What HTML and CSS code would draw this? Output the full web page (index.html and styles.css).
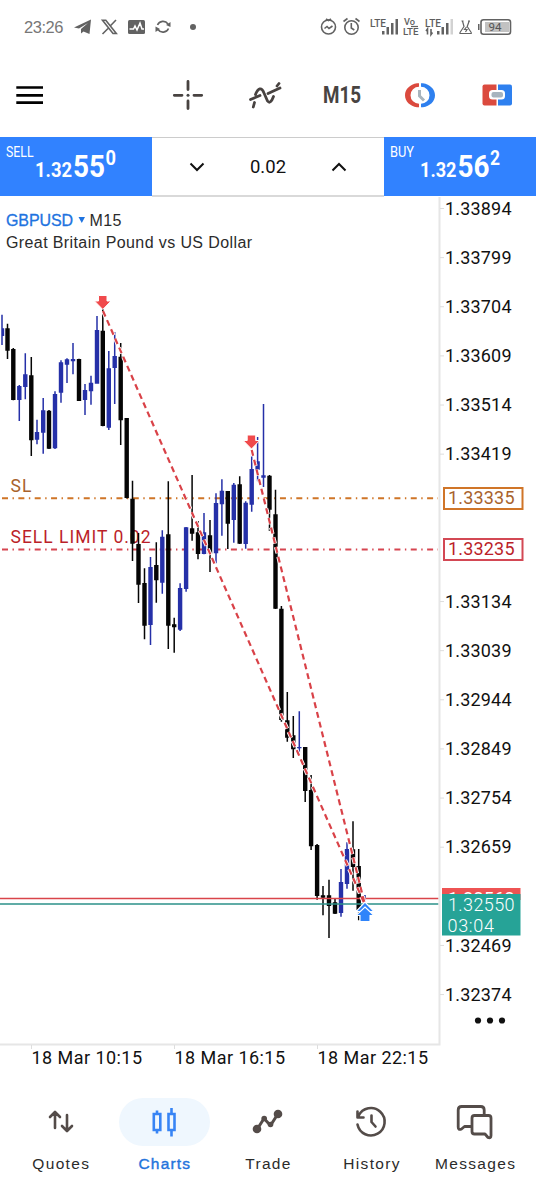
FILE: index.html
```html
<!DOCTYPE html>
<html lang="en">
<head>
<meta charset="utf-8">
<title>GBPUSD M15</title>
<link rel="stylesheet" href="styles.css">
</head>
<body>
<header class="status">
  <svg width="536" height="54" viewBox="0 0 536 54">
    <text class="clock" x="24" y="33" textLength="39.500">23:26</text>
    <path class="sfill" d="M74 27.500 91 19.500 89.500 34 83.500 31.500 81 33.500V29L88 23 79 28.500Z"/>
    <g class="sline"><path d="M102.500 20.300h3.300l10.500 13.200h-3.300zM116 20 110.200 26M108 28.500 102.500 34"/></g>
    <rect class="sfill" x="128" y="20" width="17" height="14" rx="1.500"/>
    <path d="M129.500 29h4l1.500-3 2 4 3-7 2 6h2" fill="none" stroke="#fff" stroke-width="1.500"/>
    <g class="sline"><path d="M157.500 25a6 6 0 0 1 10.500-1M168.500 28.500a6 6 0 0 1-10.500 1"/></g>
    <path class="sfill" d="M170.500 22v5l-4.500-2zM155.500 32v-5.500l4.500 2.500z"/>
    <circle class="sfill" cx="193" cy="27" r="3"/>
    <g class="sline">
      <circle cx="328.500" cy="27" r="7"/><path d="M324.500 28.500l2.500-2 2 2 3.500-2.500M326 19l2.500 1.500L331 19"/>
      <circle cx="351.500" cy="27.500" r="6.700"/><path d="M351.300 23v5l3 2M343.500 21.500l4-3M359.500 21.500l-4-3"/>
    </g>
    <text class="tiny" x="370" y="26.500" textLength="16" lengthAdjust="spacingAndGlyphs">LTE</text>
    <path class="sfill" d="M382 31h2.500v3.500H382zM386.500 27h2.500v7.500h-2.500zM391 23h2.500v11.500H391zM395.500 19h2.500v15.500h-2.500z"/>
    <text class="tiny stack" x="404" y="25" textLength="11" lengthAdjust="spacingAndGlyphs">Vo</text>
    <text class="tiny stack" x="403" y="35" textLength="15.500" lengthAdjust="spacingAndGlyphs">LTE</text>
    <path class="sline thin" d="M411 26.500h7"/>
    <text class="tiny" x="425" y="26.500" textLength="16" lengthAdjust="spacingAndGlyphs">LTE</text>
    <path class="sline" d="M427.500 34.500v-5.500l-1.500 2M431 29v5.500l1.500-2"/>
    <path class="sfill" d="M437 31h2.500v3.500H437zM441.500 27h2.500v7.500h-2.500zM446 23h2.500v11.500H446z"/>
    <path d="M450.500 19h2.500v15.500h-2.500z" fill="#d2d2d2"/>
    <path class="sline thin" d="M462.500 21l1.500 5.500-4 6q-.8 1 1 1h9.500q1.500 0 .7-1l-4-6 2-5.500M461.500 21h2M468 21h2M466.500 27l-2 2.500h2.500l-1.500 2.500"/>
    <rect class="sline" x="481" y="19.700" width="29.500" height="14.500" rx="2.500"/>
    <path class="sfill" d="M478 24h1.500v6H478z"/><rect x="485" y="22" width="24" height="10" fill="#c2c2c2"/>
    <text class="battery" x="488.500" y="31.200" textLength="13" lengthAdjust="spacingAndGlyphs">94</text>
  </svg>
</header>

<nav class="toolbar">
  <svg width="28" height="28" viewBox="16 81 28 28"><path d="M16.300 87.500h26.700M16.300 95.300h26.700M16.300 102.700h26.700" stroke="#000" stroke-width="2.700"/></svg>
  <span></span>
  <svg width="32" height="32" viewBox="171.500 79 32 32"><path class="tool" d="M187.500 81.500v8M187.500 101v7.500M173.800 95.300h7.700M193.500 95.300h7.700"/><circle cx="187.500" cy="95.300" r="1.500" fill="#444"/></svg>
  <svg width="34" height="32" viewBox="247 79 34 32"><path class="tool" d="M249.500 99.500l9.500-4M254.500 94.500c2.500-6.500 6-8 8.500-1.500l3.500 8c2 2.500 4 1 6-4.500M253.500 102.500l-1.200 4.500M267 93.500l12-5.500M276 86l2-2.500"/></svg>
  <svg width="50" height="40" viewBox="317 75 50 40"><text class="period" x="323" y="103" textLength="38" lengthAdjust="spacingAndGlyphs">M15</text></svg>
  <svg width="32" height="32" viewBox="404 79 32 32"><path d="M419 83.200h-2c-7 1-12 6-12 12s5 11 12 12h2v-3.500a8.500 8.500 0 0 1 0-17z" fill="#db4a3e"/><path d="M421 83.200h2c7 1 12 6 12 12s-5 11-12 12h-2v-3.500a8.500 8.500 0 0 0 0-17z" fill="#2e80ef"/><path d="M419.500 90v6l4.500 4.500" fill="none" stroke="#a8b4bd" stroke-width="3"/></svg>
  <svg width="32" height="26" viewBox="481 82.500 32 26"><path d="M496.500 85h-12q-2 0-2 2v17q0 2 2 2h12z" fill="#db4a3e"/><path d="M498 85h12q2 0 2 2v17q0 2-2 2h-12z" fill="#2e80ef"/><rect x="489" y="90.500" width="16" height="9.500" rx="3.500" fill="#fff"/><rect x="491.500" y="92.500" width="11.500" height="5.500" rx="2" fill="#a7b4be"/></svg>
</nav>

<section class="trade">
  <svg class="quote" width="152" height="59" viewBox="0 137 152 59">
    <text x="6" y="157" font-size="15.500" textLength="27.500" lengthAdjust="spacingAndGlyphs">SELL</text>
    <g class="price"><text x="35" y="177" font-size="20.500" textLength="37" lengthAdjust="spacingAndGlyphs">1.32</text><text x="73" y="177" font-size="31.500" textLength="32" lengthAdjust="spacingAndGlyphs">55</text><text x="105.500" y="164.500" font-size="20" textLength="10.500" lengthAdjust="spacingAndGlyphs">0</text></g>
  </svg>
  <div class="stepper">
    <svg width="18" height="12" viewBox="0 0 18 12"><path d="M2.500 2.500 9 9l6.500-6.500"/></svg>
    <span>0.02</span>
    <svg width="18" height="12" viewBox="0 0 18 12"><path d="M2.500 9.500 9 3l6.500 6.500"/></svg>
  </div>
  <svg class="quote" width="152" height="59" viewBox="384 137 152 59">
    <text x="390" y="157" font-size="15.500" textLength="24" lengthAdjust="spacingAndGlyphs">BUY</text>
    <g class="price"><text x="420" y="177" font-size="20.500" textLength="36.500" lengthAdjust="spacingAndGlyphs">1.32</text><text x="457.500" y="177" font-size="31.500" textLength="32" lengthAdjust="spacingAndGlyphs">56</text><text x="490" y="164.500" font-size="20" textLength="10" lengthAdjust="spacingAndGlyphs">2</text></g>
  </svg>
</section>

<main>
  <svg class="chart" width="536" height="873" viewBox="0 197 536 873">
    <g fill="none" stroke-width="2" stroke-dasharray="6 4.500 1.400 4.450">
      <path d="M2 498.200H438" stroke="#cf7527"/><path d="M2 549.500H438" stroke="#d64550"/>
    </g>
    <text x="10.500" y="492" fill="#a8622c" font-size="17.500" textLength="21">SL</text>
    <text x="10.500" y="543" fill="#bb1f29" font-size="17.500" textLength="140">SELL LIMIT 0.02</text>
    <g id="candles"></g>
    <path d="M0 898.500H438.500" stroke="#d9444a" stroke-width="1.600"/>
    <path d="M0 904H438.500" stroke="#2b9189" stroke-width="1.600"/>
    <g fill="none">
      <path d="M103 311 365 905M251.700 450 365 905" stroke="#fff" stroke-width="4" stroke-dasharray="6.500 3.500"/>
      <path d="M103 311 365 905M251.700 450 365 905" stroke="#d94248" stroke-width="2.200" stroke-dasharray="6 4"/>
    </g>
    <g fill="#f04a4c" stroke="#fff" stroke-width="1">
      <path d="M98.500 295.500h8.500v5.500h4l-8.200 8.500-8.300-8.500h4z"/>
      <path d="M247.200 435h8.500v5.500h4l-8.200 8.500-8.300-8.500h4z"/>
    </g>
    <g stroke="#fff" stroke-width="1.100" fill="#2f84fa">
      <path d="M365 902l9 9.500h-4v4h-10v-4h-4z"/>
      <path d="M365 907l9 8.500h-4v6h-10v-6h-4z"/>
    </g>
    <path d="M439.500 197V1044.500M0 1044.500H440.500" stroke="#e6e6e6" stroke-width="2"/>
    <path d="M31.500 1045v4M174.500 1045v4M317.500 1045v4" stroke="#dedede"/>
    <g id="prices"></g>
    <g fill="#fff" stroke-width="2"><rect x="444" y="488" width="78.500" height="21" stroke="#d07528"/><rect x="444" y="539" width="78.500" height="21" stroke="#d34854"/></g>
    <text x="448" y="504" fill="#a8622c" textLength="66.500">1.33335</text>
    <text x="448" y="555" fill="#bb1f29" textLength="66.500">1.33235</text>
    <rect x="442" y="888" width="78.500" height="12" fill="#ee5353"/>
    <text x="448" y="904.500" fill="#fff" textLength="66.500">1.32562</text>
    <rect x="442" y="894" width="78.500" height="41.500" fill="#26a397"/>
    <g class="live"><text x="448" y="910.500" textLength="66.500">1.32550</text><text x="447.500" y="931.500" textLength="46.500">03:04</text></g>
    <circle cx="478" cy="1020.500" r="3.100"/><circle cx="490" cy="1020.500" r="3.100"/><circle cx="502" cy="1020.500" r="3.100"/>
    <g class="title">
      <text x="6" y="226" fill="#1e73e0" stroke="#1e73e0" stroke-width=".3" textLength="67">GBPUSD</text><path d="M78.500 217h6.500l-3.200 6z" fill="#1e73e0"/>
      <text x="89.500" y="226" textLength="32">M15</text>
      <text x="6" y="248" textLength="246">Great Britain Pound vs US Dollar</text>
    </g>
    <text x="31.500" y="1063.500" textLength="110.500">18 Mar 10:15</text>
    <text x="174.500" y="1063.500" textLength="110.500">18 Mar 16:15</text>
    <text x="317.500" y="1063.500" textLength="110.500">18 Mar 22:15</text>
  </svg>
</main>

<nav class="tabs">
  <div class="tab"><div class="icon"><svg width="28" height="30" viewBox="47 1107 28 30"><path class="glyph" stroke-width="2.600" d="M55 1128v-15.500M50 1117l5-5 5 5M67 1115v15.500M62 1126l5 5 5-5"/></svg></div><span class="label">Quotes</span></div>
  <div class="tab active"><div class="icon"><svg width="28" height="32" viewBox="150.500 1106 28 32"><path d="M154.300 1114h6.500v16h-6.500zM157.500 1110.500v3.500M157.500 1130v3.500M169 1114h6v16h-6zM172 1108v6M172 1130v6.500" fill="none" stroke="#3784f5" stroke-width="2.600"/></svg></div><span class="label">Charts</span></div>
  <div class="tab"><div class="icon"><svg width="32" height="30" viewBox="252.500 1107 32 30"><path class="glyph" stroke-width="3" d="M257.500 1129.500l7-11 6.500 7 7-11"/><circle cx="257.500" cy="1129" r="4.300" fill="#544c49"/><circle cx="278.500" cy="1114" r="4.300" fill="#544c49"/><circle cx="264.700" cy="1118.500" r="2.800" fill="#544c49"/><circle cx="271" cy="1124.500" r="2.800" fill="#544c49"/></svg></div><span class="label">Trade</span></div>
  <div class="tab"><div class="icon"><svg width="34" height="34" viewBox="355 1105 34 34"><path class="glyph" stroke-width="2.600" d="M358.500 1116a13.700 13.700 0 1 1-1 8.500M357.500 1111.500v6h6M371.500 1115.500v6.500l4 4.500"/></svg></div><span class="label">History</span></div>
  <div class="tab"><div class="icon"><svg width="40" height="38" viewBox="455.500 1103 40 38"><path class="glyph" stroke-width="2.800" d="M471 1126.500h-6l-3 2.500q-3.300 1.500-3.300-2v-17q0-3.500 3.500-3.500h19q3.500 0 3.500 3.500v4.500M475 1115.500h14q2.500 0 2.500 2.500v17.500q0 3-3 2l-3-3.500H475q-2.500 0-2.500-2.500v-13.500q0-2.500 2.500-2.500z"/></svg></div><span class="label">Messages</span></div>
</nav>
<script src="chart.js"></script>
</body>
</html>
```
FILE: styles.css
```css
* { box-sizing: border-box; }
body { margin: 0; width: 536px; height: 1199px; overflow: hidden; display: flex; flex-direction: column; background: #fff; color: #111; font-family: Roboto, "Liberation Sans", sans-serif; }
svg { display: block; }
.status { height: 54px; }
.clock { font: 16.500px "Liberation Sans", sans-serif; fill: #777; }
.sfill { fill: #626262; }
.sline { fill: none; stroke: #626262; stroke-width: 1.600; }
.thin { stroke-width: 1.200; }
.tiny { font: 500 10.500px Roboto, sans-serif; fill: #5e5e5e; }
.stack { font-size: 9.500px; }
.battery { font: 11.500px Roboto, sans-serif; fill: #555; }
.toolbar { height: 83px; padding-bottom: 1px; display: grid; grid-template-columns: 60px 89px repeat(5, 77.400px); align-items: center; justify-items: center; }
.tool { fill: none; stroke: #484341; stroke-width: 2.800; stroke-linecap: round; stroke-linejoin: round; }
.period { font: 700 23px Roboto, sans-serif; fill: #484341; }
.trade { height: 60px; display: flex; }
.quote { background: #3182ff; fill: #fff; }
.price { font-weight: 700; }
.stepper { flex: 1; display: flex; align-items: center; justify-content: space-between; padding: 0 36px; border-top: 1.500px solid #ccc; border-bottom: 2px solid #d9d9d9; font-size: 18.500px; }
.stepper path { fill: none; stroke: #111; stroke-width: 2; }
.chart { font-size: 18px; fill: #111; }
.title { font: 16px "Liberation Sans", sans-serif; fill: #2b2b2b; }
.live { fill: #fff; font-weight: 300; }
.tabs { flex: 1; display: flex; padding: 28px 9px 0; }
.tab { flex: 1; display: flex; flex-direction: column; align-items: center; gap: 8px; }
.icon { width: 91px; height: 48px; border-radius: 24px; display: flex; align-items: center; justify-content: center; }
.active .icon { background: #eff7fe; }
.glyph { fill: none; stroke: #544c49; stroke-linecap: round; stroke-linejoin: round; }
.label { font-family: "Liberation Sans", sans-serif; font-size: 15.500px; line-height: 20px; letter-spacing: 1.350px; margin-right: -1px; white-space: nowrap; color: #2b2b2b; }
.active .label { color: #2474dc; -webkit-text-stroke: .4px #2474dc; letter-spacing: 1.200px; }
```
FILE: chart.js
```javascript
// x, high, low, body top, body bottom, color (b = bullish, k = bearish)
const candles = [
[2,314.7,345,328.3,336,'b'],[7.5,323.7,359,328.3,350.7,'k'],[13.3,348,400.3,349,400,'k'],[19.3,385,421,386,400,'b'],
[25.3,353.3,399.3,374.3,387,'b'],[31.3,357,456,375.3,440.3,'k'],[37,419.7,444.3,432,439.7,'b'],[43.2,398,453.7,410.3,432.7,'b'],
[49,410,449,410.7,448.7,'k'],[55,391.3,449,394,448.3,'b'],[61,360.3,402.7,362.3,392.7,'b'],[67,358.3,383,359.3,364.7,'b'],
[73,343,374.3,359,361.3,'b'],[79,358.7,401,359,401,'k'],[85,384,415,390,400,'b'],[91,375.7,404.7,382.7,391.3,'b'],
[97,316,383.7,330,383.7,'b'],[102.8,309,426.3,330.7,426,'k'],[108.8,351,430,368.3,427.7,'b'],[114.7,332,404,356,368,'b'],
[120.7,343,445,356.7,420.3,'k'],[126.7,418,498.5,418,498,'k'],[132.5,480.7,561,498.7,543.7,'k'],[138.5,533,603,544,584.7,'k'],
[144.5,568.3,639.3,583,625.7,'k'],[150.5,557,645,567,625,'b'],[156.3,542.3,602.7,565,580.3,'k'],[162.3,530.3,593.7,536.7,582.7,'b'],
[168.3,481.3,649,534.3,625.7,'k'],[174.2,617.7,652.7,624.3,627.3,'k'],[180.1,583.3,631,588,629.7,'b'],[186.1,527,591.7,527.3,589,'b'],
[192.1,475,540.7,528.3,533.7,'k'],[198,521,559.3,532.3,554,'k'],[204,513,554.3,532.3,554,'b'],[210,520,572,535.3,553.7,'k'],
[216,493.3,563.3,503,553.3,'b'],[221.9,479.3,535.7,490.7,504.3,'b'],[227.8,491,549,491,523.7,'k'],[233.8,483,542.7,484.7,520,'b'],
[239.7,476.3,544,484.3,543.7,'k'],[245.7,501.3,548.7,502.7,544,'b'],[251.7,450,511.7,469,504.7,'b'],[257.6,437,481.3,461.3,469.7,'b'],
[263.5,404,487,475.3,477.7,'b'],[269.5,475,531,475.7,509.7,'k'],[275.5,489.7,609,514.3,608.7,'k'],[281.4,606,721.7,608.7,720,'k'],
[287.3,692,741.7,720.3,737.7,'k'],[293.3,716,758,735.3,749.3,'k'],[299.3,711.3,752.7,747,748.3,'b'],[305.2,747,802,747,791,'k'],
[311.1,775,850,790,846.3,'k'],[317.1,844,899.7,845,896,'k'],[323,886,915.3,895.3,897.7,'k'],[329,879.7,938,895.3,906,'k'],
[335,898.3,914,902.3,913.7,'k'],[341,869,916.7,882,913,'b'],[347,842.3,888.7,849,884,'b'],[353,821.3,890.7,849.3,867,'k'],
[358.7,849,920.3,866,910,'k'],[365,895,905,903,904,'b']
];
document.getElementById('candles').innerHTML = candles.map(([x, high, low, top, bottom, c]) => {
  const fill = c === 'b' ? '#2530a8' : '#050505';
  const left = x < 3 ? 1.7 : x - 2.2;
  return `<path fill="${fill}" d="M${x - .75} ${high}h1.500V${low}h-1.500zM${left} ${top}H${x + 2.2}V${bottom}H${left}z"/>`;
}).join('');

const hidden = [6, 7, 14];
let axis = '';
for (let i = 0; i < 17; i++) {
  if (hidden.includes(i)) continue;
  const y = 208.5 + i * 49.13;
  axis += `<path d="M440 ${y}h4" stroke="#ddd"/><text x="445" y="${y + 6.3}" textLength="66.500">${(1.33894 - i * .00095).toFixed(5)}</text>`;
}
document.getElementById('prices').innerHTML = axis;
```
